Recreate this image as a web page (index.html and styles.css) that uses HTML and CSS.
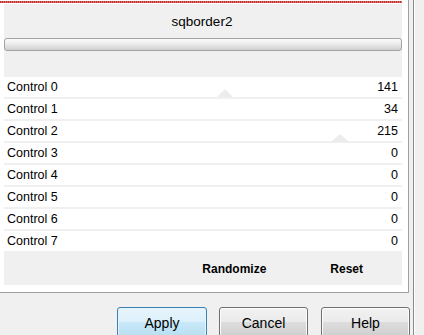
FILE: index.html
```html
<!DOCTYPE html>
<html>
<head>
<meta charset="utf-8">
<link rel="stylesheet" href="styles.css">
</head>
<body>
<div class="window">
  <div class="panel">
    <div class="marquee"></div>
    <div class="inner">
      <div class="title">sqborder2</div>
      <div class="bar"></div>
      <div class="list">
        <div class="row"><span>Control 0</span><span>141</span></div>
        <div class="row"><span>Control 1</span><span>34</span></div>
        <div class="row"><span>Control 2</span><span>215</span></div>
        <div class="row"><span>Control 3</span><span>0</span></div>
        <div class="row"><span>Control 4</span><span>0</span></div>
        <div class="row"><span>Control 5</span><span>0</span></div>
        <div class="row"><span>Control 6</span><span>0</span></div>
        <div class="row"><span>Control 7</span><span>0</span></div>
        <div class="ghost ghost-a"></div>
        <div class="ghost ghost-b"></div>
      </div>
      <div class="actions"><span class="rand">Randomize</span><span class="reset">Reset</span></div>
    </div>
  </div>
  <div class="buttons">
    <button class="btn btn-default">Apply</button>
    <button class="btn btn-cancel">Cancel</button>
    <button class="btn btn-help">Help</button>
  </div>
</div>
</body>
</html>
```

FILE: styles.css
```css
html, body {
  margin: 0;
  padding: 0;
}
body {
  width: 424px;
  height: 335px;
  overflow: hidden;
  background: #f0f0f0;
  font-family: "Liberation Sans", Arial, sans-serif;
  color: #000;
}
.window {
  width: 414px;
  height: 335px;
  box-sizing: border-box;
  border-right: 1px solid #8a8a8a;
  box-shadow: 1px 0 0 #ffffff;
}
.panel {
  width: 409px;
  height: 293px;
  box-sizing: border-box;
  background: #ffffff;
  border-right: 1px solid #a0a0a0;
  border-bottom: 1px solid #a0a0a0;
  padding-top: 1px;
}
.marquee {
  width: 402px;
  height: 2px;
  margin-bottom: 1px;
  background: repeating-linear-gradient(90deg, #c03030 0 1px, #d87070 1px 2px);
}
.inner {
  margin-left: 4px;
  width: 398px;
  height: 281px;
  background: #f0f0f0;
  display: flex;
  flex-direction: column;
}
.title {
  padding-top: 10px;
  line-height: 16px;
  font-size: 13.5px;
  text-align: center;
  padding-right: 2px;
}
.bar {
  margin-top: 8px;
  height: 13px;
  box-sizing: border-box;
  border: 1px solid #a3a3a3;
  border-radius: 3px;
  background: linear-gradient(#fbfbfb 0%, #f0f0f0 35%, #dcdcdc 75%, #cfcfcf 100%);
}
.list {
  position: relative;
  margin-top: 26px;
  display: flex;
  flex-direction: column;
  gap: 2px;
}
.row {
  height: 20px;
  background: #ffffff;
  display: flex;
  justify-content: space-between;
  align-items: center;
  padding: 0 4px 0 3px;
  font-size: 12.5px;
}
.ghost {
  position: absolute;
  width: 0;
  height: 0;
  border-left: 8px solid transparent;
  border-right: 8px solid transparent;
  border-bottom: 8px solid #ececec;
}
.ghost-a {
  left: 213px;
  top: 12px;
}
.ghost-b {
  left: 327px;
  top: 57px;
  border-left-width: 9px;
  border-right-width: 9px;
}
.actions {
  height: 34px;
  display: flex;
  align-items: center;
  justify-content: flex-end;
  padding-right: 39px;
  padding-top: 2px;
  box-sizing: border-box;
  font-size: 12px;
  font-weight: bold;
  gap: 64px;
}
.buttons {
  margin-top: 14px;
  padding-left: 117px;
  display: flex;
  gap: 12px;
}
.btn {
  width: 89px;
  height: 30px;
  box-sizing: border-box;
  border: 1px solid #707070;
  border-radius: 3px;
  box-shadow: inset 0 0 0 1px #fcfcfc;
  background: linear-gradient(#f2f2f2 0%, #ebebeb 48%, #dddddd 52%, #cfcfcf 100%);
  font-family: "Liberation Sans", Arial, sans-serif;
  font-size: 14px;
  color: #000;
  padding: 1px 0 0 0;
  margin: 0;
}
.btn-default {
  width: 90px;
  border-color: #3c7fb1;
  box-shadow: inset 0 0 0 1px #e4f4fc;
  background: linear-gradient(#e8f5fc 0%, #dcf0fb 48%, #c8e8f8 52%, #b8dff2 100%);
}
.btn-help {
  margin-left: 1px;
}
```
